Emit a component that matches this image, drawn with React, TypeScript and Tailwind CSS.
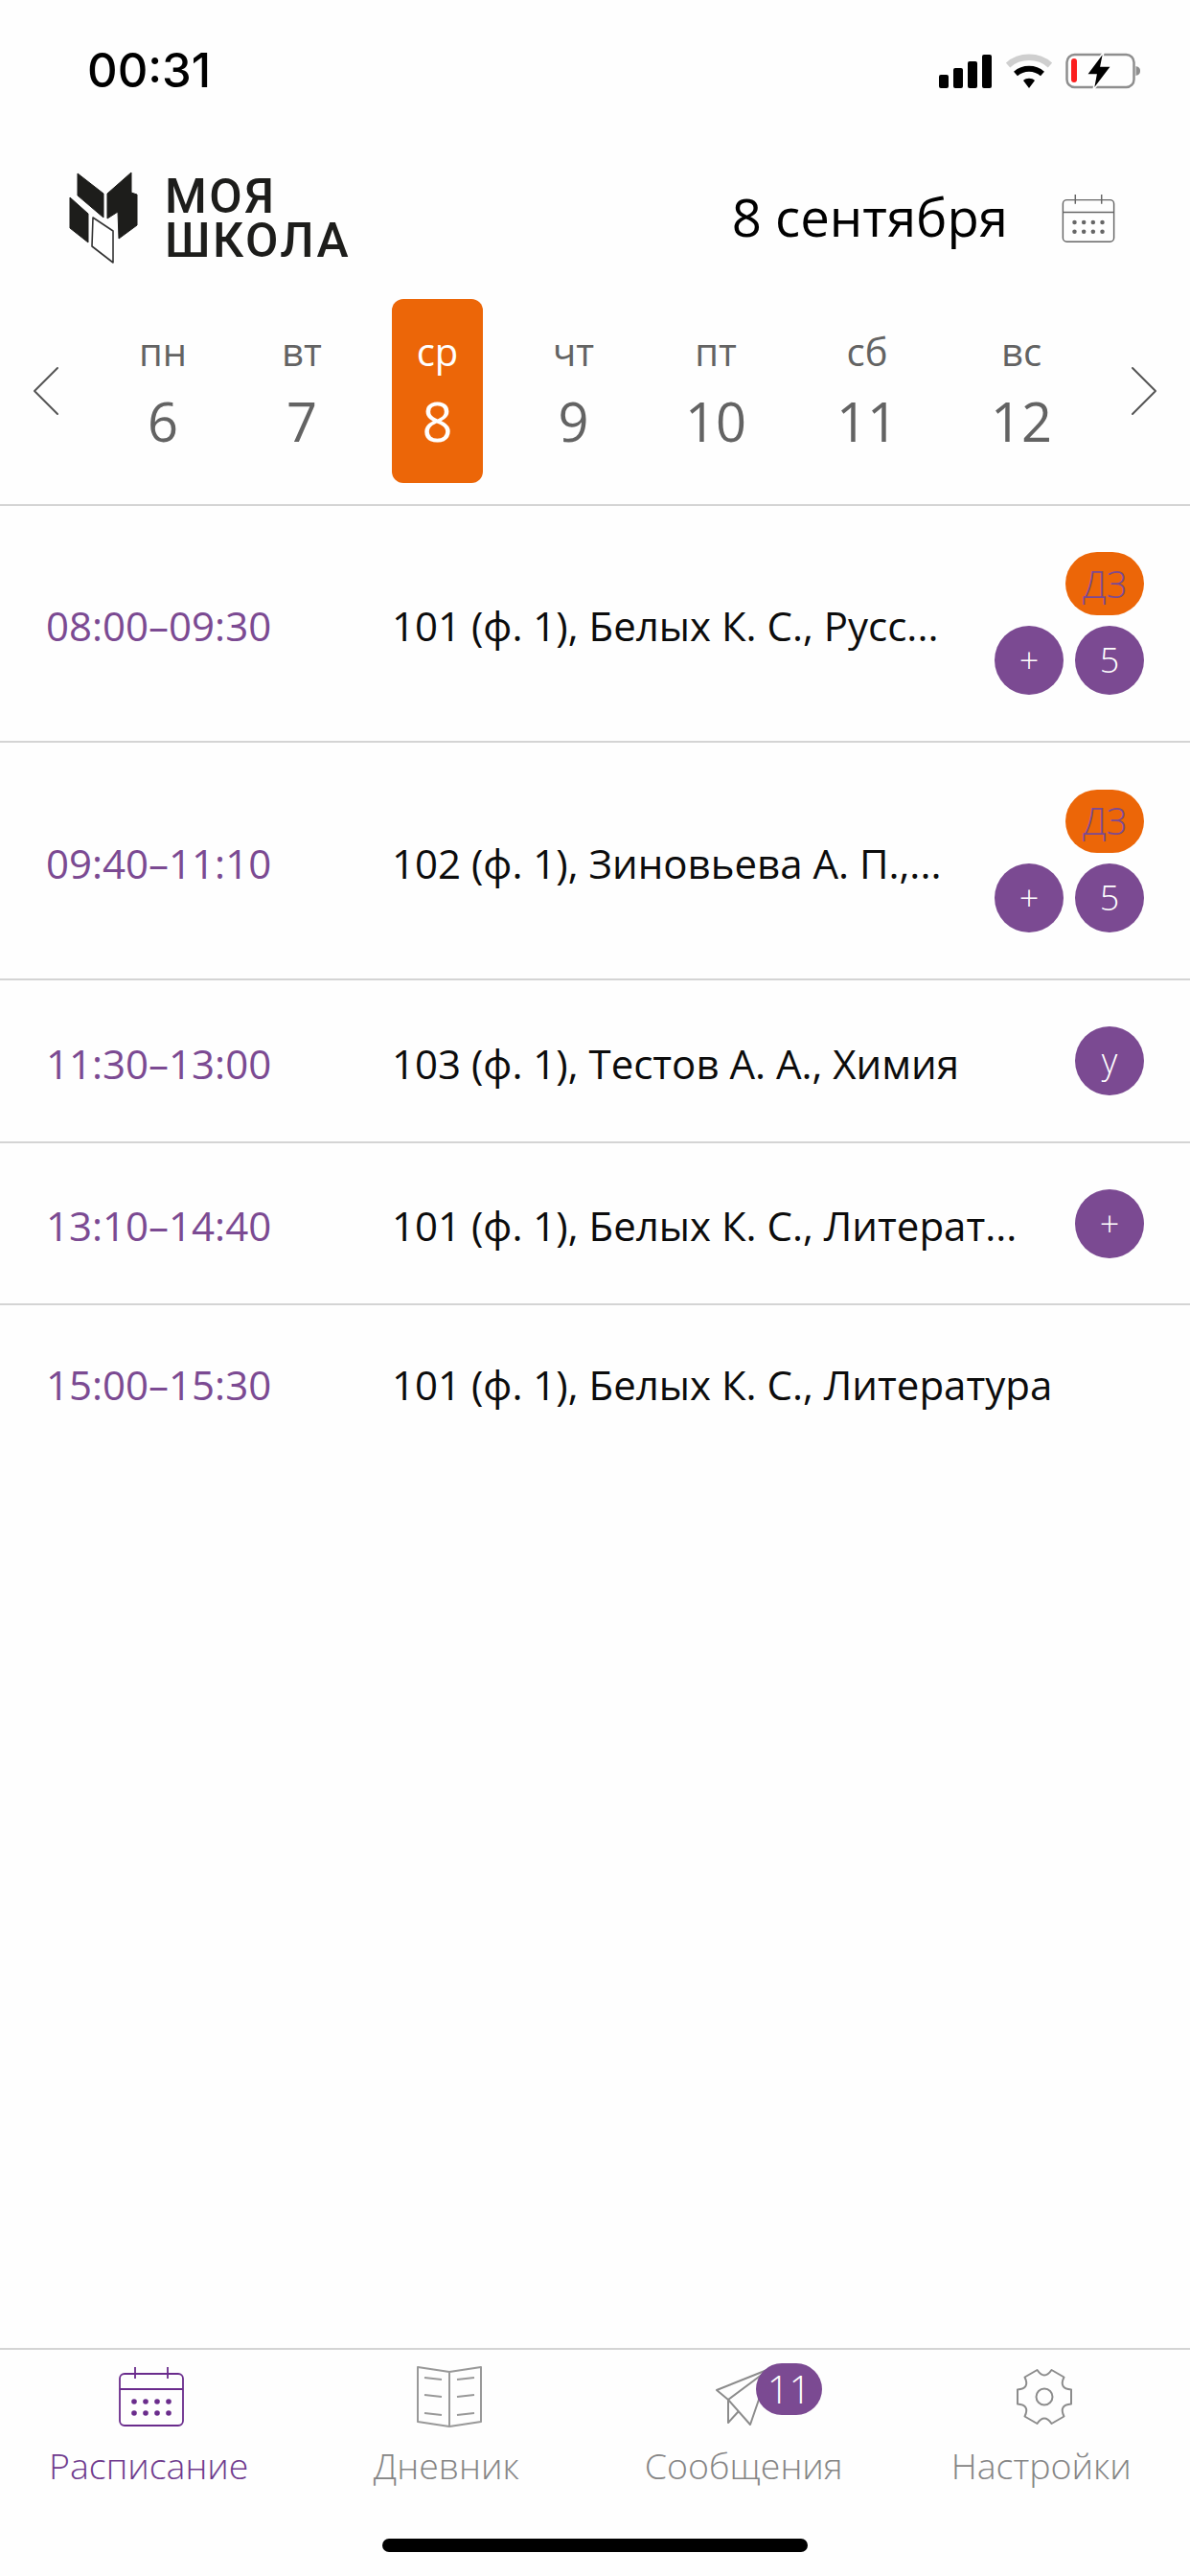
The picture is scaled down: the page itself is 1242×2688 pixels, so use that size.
import React from 'react';
import { ChevronLeft, ChevronRight } from 'lucide-react';

const days = [
  { label: 'пн', num: '6', w: 'w-[148px]' },
  { label: 'вт', num: '7', w: 'w-[142px]' },
  { label: 'ср', num: '8', w: 'w-[141px]', active: true },
  { label: 'чт', num: '9', w: 'w-[143px]' },
  { label: 'пт', num: '10', w: 'w-[154px]' },
  { label: 'сб', num: '11', w: 'w-[162px]' },
  { label: 'вс', num: '12', w: 'w-[160px]' },
];

const lessons = [
  { time: '08:00–09:30', text: '101 (ф. 1), Белых К. С., Русс...', h: 'h-[247px]', hw: true, badges: ['+', '5'] },
  { time: '09:40–11:10', text: '102 (ф. 1), Зиновьева А. П.,...', h: 'h-[248px]', hw: true, badges: ['+', '5'] },
  { time: '11:30–13:00', text: '103 (ф. 1), Тестов А. А., Химия', h: 'h-[170px]', badges: ['у'] },
  { time: '13:10–14:40', text: '101 (ф. 1), Белых К. С., Литерат...', h: 'h-[169px]', badges: ['+'] },
  { time: '15:00–15:30', text: '101 (ф. 1), Белых К. С., Литература', h: 'h-[160px]', last: true, badges: [] as string[] },
];

function StatusIcons() {
  return (
    <div className="flex items-center">
      <div className="flex items-end gap-[5px] h-[35px]">
        <div className="w-[10px] h-[14px] rounded-[2px] bg-black" />
        <div className="w-[10px] h-[21px] rounded-[2px] bg-black" />
        <div className="w-[10px] h-[28px] rounded-[2px] bg-black" />
        <div className="w-[10px] h-[35px] rounded-[2px] bg-black" />
      </div>
      <svg width="48" height="36" viewBox="0 0 48 36" className="ml-[15px]">
        <path d="M2 12 C14 1 34 1 46 12" fill="none" stroke="#cfcfcf" strokeWidth="6.5" />
        <path d="M10 21 C18 14 30 14 38 21" fill="none" stroke="#000" strokeWidth="6" />
        <path d="M18 28 L24 36 L30 28 C27 25 21 25 18 28 Z" fill="#000" />
      </svg>
      <svg width="80" height="40" viewBox="0 -1 80 40" className="ml-[14px]">
        <rect x="1.5" y="2" width="70" height="34" rx="8" fill="none" stroke="#8e8e8e" strokeWidth="2.5" />
        <rect x="6" y="6" width="6" height="25" rx="3" fill="#fb1f1f" />
        <path d="M73.5 14 C77 15 78 16.5 78 19 C78 21.5 77 23 73.5 24 Z" fill="#8e8e8e" />
        <path d="M40 -1 L22 23 L32 23 L29 39 L48 14 L37 14 Z" fill="#000" stroke="#fff" strokeWidth="1.5" />
      </svg>
    </div>
  );
}

function Logo() {
  return (
    <svg width="76" height="100" viewBox="70 178 76 100">
      <g fill="#1d1d1b" stroke="#1d1d1b" strokeWidth="1" strokeLinejoin="round">
        <path d="M81 181 L108 202 L108 227 L81 204 Z" />
        <path d="M112 202 L137 180 L137 201 L143 203 L143 235 L124 249 L123 221 L112 228 Z" />
        <path d="M73 206 L92 223 L92 253 L73 238 Z" />
      </g>
      <path d="M97 227 L118 241 L118 274 L96 257 Z" fill="#fff" stroke="#333" strokeWidth="1.6" strokeLinejoin="round" />
    </svg>
  );
}

function CalendarIcon({ color, className }: { color: string; className?: string }) {
  const dots = [20, 32, 44, 56];
  return (
    <svg viewBox="0 0 68 62" className={className} fill="none" stroke={color} strokeWidth="1.8">
      <rect x="1" y="7" width="66" height="54" rx="5" />
      <path d="M1 23 H67 M17 0 V12 M51 0 V12" />
      <g fill={color} stroke="none">
        {dots.map((x) => (
          <React.Fragment key={x}>
            <circle cx={x - 4} cy="36" r="2.8" />
            <circle cx={x - 4} cy="48" r="2.8" />
          </React.Fragment>
        ))}
      </g>
    </svg>
  );
}

function BookIcon() {
  return (
    <svg width="70" height="66" viewBox="0 0 70 66" fill="none" stroke="#999" strokeWidth="2" strokeLinejoin="round">
      <path d="M2 2 L35 7 L68 2 V59 L35 64 L2 59 Z M35 7 V64" />
      <path d="M9 13 L27 15 M43 15 L61 13 M9 31 L27 33 M43 33 L61 31 M9 50 L27 52 M43 52 L61 50" strokeWidth="2" />
    </svg>
  );
}

function PlaneIcon() {
  return (
    <svg width="64" height="62" viewBox="0 0 64 62" fill="none" stroke="#8c8c8c" strokeWidth="2" strokeLinejoin="round">
      <path d="M1 24 L56 2 L36 60 L13 34 Z" />
      <path d="M13 34 L56 2 M13 34 V58 L24 46" />
    </svg>
  );
}

const gearPath = (() => {
  const pt = (deg: number, r: number) => {
    const a = (deg * Math.PI) / 180;
    return `${(30 + r * Math.cos(a)).toFixed(1)} ${(30 + r * Math.sin(a)).toFixed(1)}`;
  };
  let d = `M${pt(-15, 29)}`;
  for (let i = 0; i < 6; i++) {
    const a = i * 60;
    d += ` L${pt(a + 15, 29)} Q${pt(a + 30, 17)} ${pt(a + 45, 29)}`;
  }
  return d + ' Z';
})();

function GearIcon() {
  return (
    <svg width="60" height="60" viewBox="0 0 60 60" fill="none" stroke="#8c8c8c" strokeWidth="2" strokeLinejoin="round">
      <path d={gearPath} />
      <ellipse cx="30" cy="30" rx="8.5" ry="8.5" />
    </svg>
  );
}

function Circle({ children }: { children: React.ReactNode }) {
  return (
    <div className="w-[72px] h-[72px] rounded-full bg-[#7b4a92] text-white flex items-center justify-center text-[36px] font-light">
      {children}
    </div>
  );
}

function Tab({ label, active, icon, children }: { label: string; active?: boolean; icon: React.ReactNode; children?: React.ReactNode }) {
  return (
    <div className={`relative flex-1 flex flex-col items-center ${active ? 'text-[#6f3a8d]' : 'text-[#858585]'}`}>
      <div className="h-[66px] ml-[6px] flex items-center justify-center">{icon}</div>
      <div className="mt-[14px] text-[37.5px] leading-[50px] font-light">{label}</div>
      {children}
    </div>
  );
}

export default function App() {
  return (
    <div className="w-[1242px] h-[2688px] bg-[#fefefe] flex flex-col font-['Open_Sans',sans-serif] overflow-hidden">
      {/* status bar */}
      <div className="h-[148px] flex items-center justify-between pl-[91px] pr-[50px]">
        <span className="font-['Inter',sans-serif] text-[49px] font-medium text-black">00:31</span>
        <StatusIcons />
      </div>

      {/* header */}
      <div className="h-[160px] flex items-center pl-[70px] pr-[78px]">
        <Logo />
        <div className="ml-[26px] font-['Roboto',sans-serif] font-medium text-[50px] leading-[46px] tracking-[2.5px] text-[#1d1d1b]">
          <div>МОЯ</div>
          <div>ШКОЛА</div>
        </div>
        <div className="ml-auto -mt-[3px] text-[54.5px] text-black font-normal">8 сентября</div>
        <CalendarIcon color="#666666" className="ml-[56px] w-[56px] h-[50px]" />
      </div>

      {/* week strip */}
      <div className="h-[220px] pt-[4px] border-b-2 border-[#d4d4d4] flex items-start">
        <div className="w-[96px] h-[192px] flex items-center">
          <ChevronLeft className="w-[96px] h-[96px] text-[#555555]" strokeWidth={0.5} />
        </div>
        {days.map((d) => (
          <div key={d.label} className={`${d.w} flex justify-center`}>
            <div className={`h-[192px] w-[95px] rounded-[12px] flex flex-col items-center font-normal ${d.active ? 'bg-[#ec6608] text-white' : 'text-[#636363]'}`}>
              <div className="mt-[31px] text-[40px] leading-[48px]">{d.label}</div>
              <div className="mt-[16px] text-[56px] leading-[64px]">{d.num}</div>
            </div>
          </div>
        ))}
        <div className="flex-1 h-[192px] flex items-center">
          <ChevronRight className="w-[96px] h-[96px] shrink-0 text-[#555555]" strokeWidth={0.5} />
        </div>
      </div>

      {/* lessons */}
      <div className="flex-1">
        {lessons.map((l) => (
          <div key={l.time} className={`${l.h} flex items-center pl-[48px] pr-[48px] ${l.last ? '' : 'border-b-2 border-[#d4d4d4]'}`}>
            <div className="w-[361px] pt-[4px] text-[42px] text-[#7b4a92] font-normal">{l.time}</div>
            <div className="flex-1 pt-[4px] text-[42px] text-[#0c0c0c] font-normal whitespace-nowrap">{l.text}</div>
            {l.badges.length > 0 && (
              <div className="flex flex-col items-end gap-[11px]">
                {l.hw && (
                  <div className="w-[82px] h-[66px] rounded-full bg-[#ec6608] text-[#7b4a92] flex items-center justify-center text-[38px] font-light">
                    ДЗ
                  </div>
                )}
                <div className="flex gap-[12px]">
                  {l.badges.map((b) => (
                    <Circle key={b}>{b}</Circle>
                  ))}
                </div>
              </div>
            )}
          </div>
        ))}
      </div>

      {/* tab bar */}
      <div className="h-[238px] border-t-2 border-[#d4d4d4] relative">
        <div className="flex pt-[16px]">
          <Tab label="Расписание" active icon={<CalendarIcon color="#6a2c8c" className="w-[68px] h-[62px]" />} />
          <Tab label="Дневник" icon={<BookIcon />} />
          <Tab label="Сообщения" icon={<PlaneIcon />}>
            <div className="absolute left-[168px] -top-[2px] w-[69px] h-[54px] rounded-full bg-[#7b4a92] text-white flex items-center justify-center text-[40px] font-light">
              11
            </div>
          </Tab>
          <Tab label="Настройки" icon={<GearIcon />} />
        </div>
        <div className="absolute left-[399px] bottom-[25px] w-[444px] h-[14px] rounded-full bg-black" />
      </div>
    </div>
  );
}
